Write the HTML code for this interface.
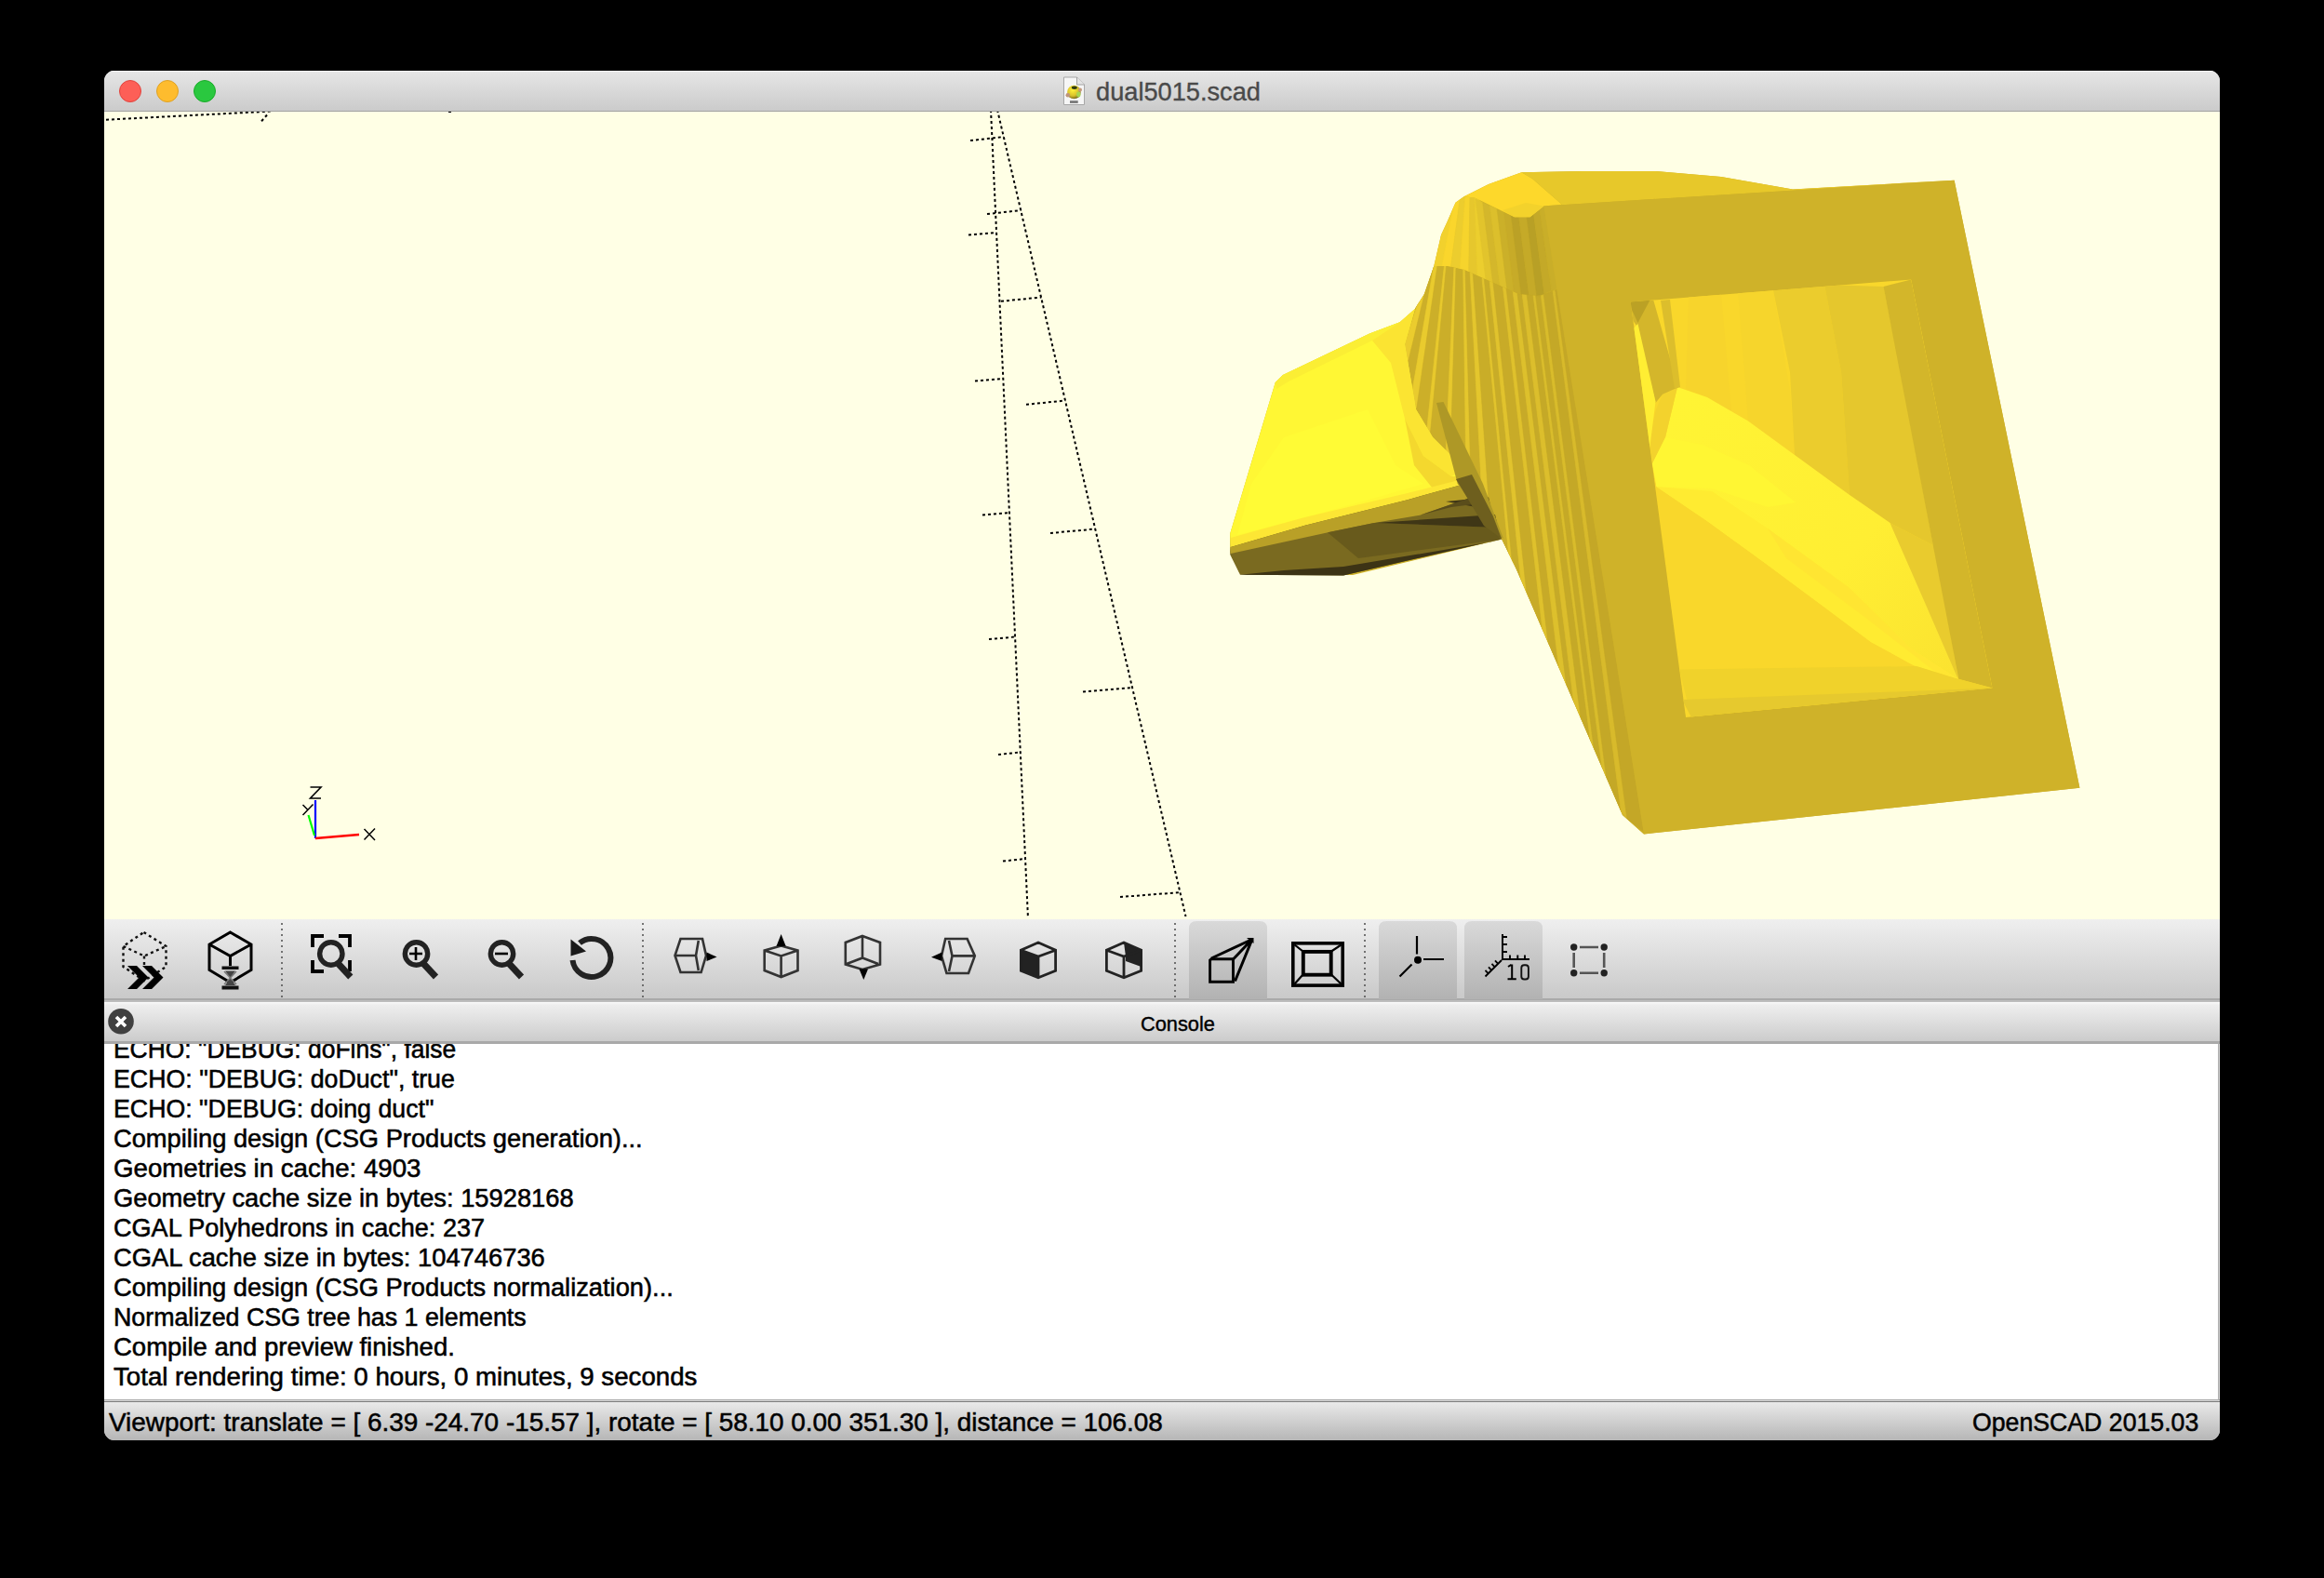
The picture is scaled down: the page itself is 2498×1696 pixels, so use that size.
<!DOCTYPE html>
<html><head><meta charset="utf-8">
<style>
*{margin:0;padding:0;box-sizing:border-box}
html,body{width:2498px;height:1696px;background:#000;overflow:hidden;font-family:"Liberation Sans",sans-serif}
.a{position:absolute}
#win{left:112px;top:76px;width:2274px;height:1472px;border-radius:11px;overflow:hidden;background:#e0e0e0}
#title{left:0;top:0;width:2274px;height:44px;background:linear-gradient(#e6e6e6,#cbcbcb);border-bottom:1px solid #a2a2a2;box-shadow:inset 0 1px 0 #f6f6f6}
.tl{width:24px;height:24px;border-radius:50%;top:10px}
#vp{left:0;top:44px;width:2274px;height:868px;background:#ffffe5;overflow:hidden}
#tb{left:0;top:912px;width:2274px;height:89px;background:linear-gradient(#efefef,#c9c9c9 85px,#a9a9a9 85px,#a9a9a9 87px,#bdbdbd 87px)}
#ch{left:0;top:1001px;width:2274px;height:45px;background:linear-gradient(#fafafa 0,#eeeeee 3px,#cccccc 42px,#a9a9a9 42px,#a9a9a9 45px)}
#cb{left:0;top:1046px;width:2273px;height:382px;background:#fff;border-right:1px solid #aaaaaa;overflow:hidden}
#sb{left:0;top:1428px;width:2274px;height:44px;background:linear-gradient(#aaaaaa 0,#aaaaaa 1px,#d8d8d8 1px,#d8d8d8 2px,#7a7a7a 2px,#7a7a7a 3px,#e9e9e9 3px,#b6b6b6)}
.ln{position:absolute;left:11px;font-size:27px;white-space:pre;color:#000;line-height:32px;transform-origin:0 0;-webkit-text-stroke:0.55px #000}
.tx{position:absolute;font-size:26px;white-space:pre;line-height:30px;transform-origin:0 0}
svg{position:absolute;left:0;top:0}
</style></head><body>
<div id="win" class="a">
  <div id="title" class="a">
    <div class="a tl" style="left:16px;top:10px;background:#fd5f57;border:1px solid #e0443e"></div>
    <div class="a tl" style="left:56px;top:10px;background:#febc2e;border:1px solid #dea123"></div>
    <div class="a tl" style="left:96px;top:10px;background:#2ac83f;border:1px solid #1aab29"></div>
    <div class="tx" style="left:1066px;top:5.4px;font-size:27.4px;line-height:36px;color:#4a4a4a;-webkit-text-stroke:0.35px #4a4a4a;transform:scaleX(0.993)">dual5015.scad</div>
  </div>
  <div id="vp" class="a"></div>
  <div id="tb" class="a"></div>
  <div id="ch" class="a">
    <div class="tx" style="left:1114px;top:11.1px;font-size:22.7px;line-height:24px;color:#000;-webkit-text-stroke:0.4px #000;transform:scaleX(0.96)">Console</div>
  </div>
  <div id="cb" class="a">
<div class="ln" style="left:10.00px;top:-10.5px;transform:scaleX(0.9786)">ECHO: &quot;DEBUG: doFins&quot;, false</div>
<div class="ln" style="left:10.00px;top:21.5px;transform:scaleX(0.9907)">ECHO: &quot;DEBUG: doDuct&quot;, true</div>
<div class="ln" style="left:10.00px;top:53.5px;transform:scaleX(0.9903)">ECHO: &quot;DEBUG: doing duct&quot;</div>
<div class="ln" style="left:10.00px;top:85.5px;transform:scaleX(1.0104)">Compiling design (CSG Products generation)...</div>
<div class="ln" style="left:10.00px;top:117.5px;transform:scaleX(1.0240)">Geometries in cache: 4903</div>
<div class="ln" style="left:10.00px;top:149.5px;transform:scaleX(1.0109)">Geometry cache size in bytes: 15928168</div>
<div class="ln" style="left:10.00px;top:181.5px;transform:scaleX(1.0020)">CGAL Polyhedrons in cache: 237</div>
<div class="ln" style="left:10.00px;top:213.5px;transform:scaleX(1.0120)">CGAL cache size in bytes: 104746736</div>
<div class="ln" style="left:10.00px;top:245.5px;transform:scaleX(1.0102)">Compiling design (CSG Products normalization)...</div>
<div class="ln" style="left:10.00px;top:277.5px;transform:scaleX(0.9920)">Normalized CSG tree has 1 elements</div>
<div class="ln" style="left:10.00px;top:309.5px;transform:scaleX(1.0185)">Compile and preview finished.</div>
<div class="ln" style="left:10.00px;top:341.5px;transform:scaleX(1.0246)">Total rendering time: 0 hours, 0 minutes, 9 seconds</div>
  </div>
  <div id="sb" class="a">
    <div class="tx" style="left:4.5px;top:10.1px;font-size:27.3px;-webkit-text-stroke:0.5px #000;transform:scaleX(1.0224)">Viewport: translate = [ 6.39 -24.70 -15.57 ], rotate = [ 58.10 0.00 351.30 ], distance = 106.08</div>
    <div class="tx" style="left:2008px;top:10.1px;font-size:27.3px;-webkit-text-stroke:0.5px #000;transform:scaleX(0.9773)">OpenSCAD 2015.03</div>
  </div>
</div>
<svg width="2498" height="1696" viewBox="0 0 2498 1696">
<defs>
<linearGradient id="pb" x1="0" y1="0" x2="0" y2="1"><stop offset="0" stop-color="#d9d9d9"/><stop offset="1" stop-color="#b2b2b2"/></linearGradient>
<clipPath id="colc"><polygon points="1541.3,286.0 1556.0,286.0 1574.3,289.9 1632.0,315.7 1655.0,318.0 1673.0,309.7 1767.0,896.5 1744.0,876.0 1630.0,612.0 1614.2,579.4 1583.0,523.0 1540.0,470.0 1522.0,440.0 1510.0,370.0 1520.9,332.0 1531.0,315.9"/></clipPath>
<clipPath id="upc"><polygon points="1564.5,217.8 1573.6,211.3 1585.2,212.6 1627.8,233.3 1644.6,233.3 1659.4,221.4 1673.0,309.7 1655.0,318.0 1632.0,315.7 1574.3,289.9 1556.0,286.0 1541.3,286.0 1549.0,252.6 1555.5,238.4"/></clipPath>
<linearGradient id="bandg" gradientUnits="userSpaceOnUse" x1="1790" y1="450" x2="2100" y2="720"><stop offset="0" stop-color="#fff434"/><stop offset="0.6" stop-color="#ffee33"/><stop offset="1" stop-color="#fbe330"/></linearGradient>
<clipPath id="inc"><polygon points="1752.7,324.5 2054.2,300.4 2141.5,739.6 1812.0,771.0"/></clipPath>
<clipPath id="vpc"><rect x="112" y="120" width="2274" height="868"/></clipPath>
</defs>
<g clip-path="url(#vpc)">
<line x1="1065" y1="118" x2="1104.9" y2="985" stroke="#000" stroke-width="2" stroke-dasharray="3 3" fill="none"/>
<line x1="1072" y1="118" x2="1274.5" y2="985" stroke="#000" stroke-width="2" stroke-dasharray="3 3" fill="none"/>
<line x1="1041" y1="252.5" x2="1071.1" y2="250" stroke="#000" stroke-width="2" stroke-dasharray="3 3" fill="none"/>
<line x1="1048" y1="409.5" x2="1078.3" y2="407" stroke="#000" stroke-width="2" stroke-dasharray="3 3" fill="none"/>
<line x1="1056" y1="553.5" x2="1085.0" y2="551" stroke="#000" stroke-width="2" stroke-dasharray="3 3" fill="none"/>
<line x1="1063" y1="687.0" x2="1091.1" y2="684.5" stroke="#000" stroke-width="2" stroke-dasharray="3 3" fill="none"/>
<line x1="1073" y1="811.0" x2="1096.8" y2="808.5" stroke="#000" stroke-width="2" stroke-dasharray="3 3" fill="none"/>
<line x1="1078" y1="925.5" x2="1102.1" y2="923" stroke="#000" stroke-width="2" stroke-dasharray="3 3" fill="none"/>
<line x1="1043" y1="151.0835" x2="1079.1" y2="147.0" stroke="#000" stroke-width="2" stroke-dasharray="3 3" fill="none"/>
<line x1="1061" y1="230.0965" x2="1097.5" y2="226.0" stroke="#000" stroke-width="2" stroke-dasharray="3 3" fill="none"/>
<line x1="1076" y1="323.801" x2="1119.4" y2="319.5" stroke="#000" stroke-width="2" stroke-dasharray="3 3" fill="none"/>
<line x1="1103" y1="434.768" x2="1145.3" y2="430.5" stroke="#000" stroke-width="2" stroke-dasharray="3 3" fill="none"/>
<line x1="1129" y1="572.954" x2="1177.5" y2="568.5" stroke="#000" stroke-width="2" stroke-dasharray="3 3" fill="none"/>
<line x1="1164" y1="743.5975" x2="1217.2" y2="739.0" stroke="#000" stroke-width="2" stroke-dasharray="3 3" fill="none"/>
<line x1="1204" y1="964.0382000000001" x2="1268.6" y2="959.1" stroke="#000" stroke-width="2" stroke-dasharray="3 3" fill="none"/>
<line x1="114" y1="128.7" x2="293" y2="119.5" stroke="#000" stroke-width="2" stroke-dasharray="3 3" fill="none"/>
<line x1="287" y1="123.5" x2="280" y2="131.5" stroke="#000" stroke-width="2" stroke-dasharray="3 3" fill="none"/>
<rect x="482" y="119" width="3" height="2" fill="#000"/>
<g>
<line x1="339" y1="901" x2="339" y2="860" stroke="#0000ff" stroke-width="2.2"/>
<line x1="338" y1="898" x2="331.5" y2="876" stroke="#00ff00" stroke-width="2.2"/>
<line x1="339" y1="901" x2="386" y2="897" stroke="#ff0000" stroke-width="2.4"/>
<path d="M333.5,846 H345 L333.5,858 H345" stroke="#000" stroke-width="1.6" fill="none"/>
<path d="M325.5,865 L331,870.5 M336.5,864.5 L325.5,876" stroke="#000" stroke-width="1.5" fill="none"/>
<path d="M391.5,891 L403,903 M403,890.5 L391.5,902.5" stroke="#000" stroke-width="1.5" fill="none"/>
</g>
<polygon points="1573.6,211.3 1600.0,198.0 1635.5,185.2 1700.0,184.0 1780.0,184.0 1850.0,190.0 1927.0,203.4 2100.6,193.8 2235.4,846.8 1767.0,896.5 1744.0,876.0 1630.0,612.0 1614.2,579.4 1454.0,618.0 1332.3,616.0 1322.2,593.6 1322.2,573.4 1370.8,411.1 1379.0,403.0 1472.2,358.4 1504.7,346.2 1520.9,332.0 1531.0,315.9 1541.3,286.0 1549.0,252.6 1555.5,238.4 1564.5,217.8" fill="#cdb029"/>
<polygon points="1541.3,286.0 1556.0,286.0 1574.3,289.9 1632.0,315.7 1655.0,318.0 1673.0,309.7 1767.0,896.5 1744.0,876.0 1630.0,612.0 1614.2,579.4 1583.0,523.0 1540.0,470.0 1522.0,440.0 1510.0,370.0 1520.9,332.0 1531.0,315.9" fill="#cbaf29"/>
<g clip-path="url(#colc)">
<polygon points="1528.0,300.0 1530.2,297.6 1494.7,371.2 1490.0,360.0" fill="#eccd2e" stroke="#eccd2e" stroke-width="0.6"/>
<polygon points="1530.2,297.6 1534.3,293.3 1503.2,391.6 1494.7,371.2" fill="#cdb029" stroke="#cdb029" stroke-width="0.6"/>
<polygon points="1534.3,293.3 1537.3,290.2 1509.4,406.5 1503.2,391.6" fill="#ebcc2e" stroke="#ebcc2e" stroke-width="0.6"/>
<polygon points="1537.3,290.2 1541.0,286.3 1517.1,425.1 1509.4,406.5" fill="#ccaf29" stroke="#ccaf29" stroke-width="0.6"/>
<polygon points="1541.0,286.3 1544.9,286.0 1522.8,438.8 1517.1,425.1" fill="#e9cb2e" stroke="#e9cb2e" stroke-width="0.6"/>
<polygon points="1544.9,286.0 1552.3,286.0 1533.4,464.2 1522.8,438.8" fill="#ccaf29" stroke="#ccaf29" stroke-width="0.6"/>
<polygon points="1552.3,286.0 1554.6,286.0 1536.8,472.2 1533.4,464.2" fill="#e8c92d" stroke="#e8c92d" stroke-width="0.6"/>
<polygon points="1554.6,286.0 1562.8,287.5 1553.6,498.2 1536.8,472.2" fill="#cbae29" stroke="#cbae29" stroke-width="0.6"/>
<polygon points="1562.8,287.5 1565.0,287.9 1558.7,505.0 1553.6,498.2" fill="#e7c82d" stroke="#e7c82d" stroke-width="0.6"/>
<polygon points="1565.0,287.9 1572.7,289.6 1576.1,528.4 1558.7,505.0" fill="#caae28" stroke="#caae28" stroke-width="0.6"/>
<polygon points="1572.7,289.6 1575.0,290.2 1581.5,535.5 1576.1,528.4" fill="#e5c72d" stroke="#e5c72d" stroke-width="0.6"/>
<polygon points="1575.0,290.2 1580.1,292.5 1593.8,552.1 1581.5,535.5" fill="#caad28" stroke="#caad28" stroke-width="0.6"/>
<polygon points="1580.1,292.5 1583.3,293.9 1601.8,562.8 1593.8,552.1" fill="#e4c62d" stroke="#e4c62d" stroke-width="0.6"/>
<polygon points="1583.3,293.9 1592.9,298.2 1621.6,596.2 1601.8,562.8" fill="#c9ad28" stroke="#c9ad28" stroke-width="0.6"/>
<polygon points="1592.9,298.2 1595.3,299.3 1625.4,605.0 1621.6,596.2" fill="#e2c42d" stroke="#e2c42d" stroke-width="0.6"/>
<polygon points="1595.3,299.3 1601.1,301.9 1635.0,626.9 1625.4,605.0" fill="#c8ac28" stroke="#c8ac28" stroke-width="0.6"/>
<polygon points="1601.1,301.9 1605.0,303.6 1641.4,641.5 1635.0,626.9" fill="#e1c32d" stroke="#e1c32d" stroke-width="0.6"/>
<polygon points="1605.0,303.6 1615.4,308.3 1658.3,680.2 1641.4,641.5" fill="#c8ab28" stroke="#c8ab28" stroke-width="0.6"/>
<polygon points="1615.4,308.3 1619.1,309.9 1664.4,694.2 1658.3,680.2" fill="#dfc12c" stroke="#dfc12c" stroke-width="0.6"/>
<polygon points="1619.1,309.9 1626.1,313.0 1675.8,720.1 1664.4,694.2" fill="#c7aa28" stroke="#c7aa28" stroke-width="0.6"/>
<polygon points="1626.1,313.0 1631.0,315.3 1683.9,738.7 1675.8,720.1" fill="#ddc02c" stroke="#ddc02c" stroke-width="0.6"/>
<polygon points="1631.0,315.3 1636.1,316.1 1691.7,756.6 1683.9,738.7" fill="#c6aa28" stroke="#c6aa28" stroke-width="0.6"/>
<polygon points="1636.1,316.1 1641.2,316.6 1699.3,773.8 1691.7,756.6" fill="#dcbe2c" stroke="#dcbe2c" stroke-width="0.6"/>
<polygon points="1641.2,316.6 1648.0,317.3 1709.5,797.3 1699.3,773.8" fill="#c5a927" stroke="#c5a927" stroke-width="0.6"/>
<polygon points="1648.0,317.3 1650.6,317.6 1713.5,806.3 1709.5,797.3" fill="#dabd2c" stroke="#dabd2c" stroke-width="0.6"/>
<polygon points="1650.6,317.6 1656.3,317.5 1722.0,825.8 1713.5,806.3" fill="#c5a927" stroke="#c5a927" stroke-width="0.6"/>
<polygon points="1656.3,317.5 1659.3,316.5 1726.8,836.7 1722.0,825.8" fill="#d9bc2b" stroke="#d9bc2b" stroke-width="0.6"/>
<polygon points="1659.3,316.5 1669.1,312.9 1742.4,872.3 1726.8,836.7" fill="#c4a827" stroke="#c4a827" stroke-width="0.6"/>
<polygon points="1669.1,312.9 1671.7,312.0 1748.9,879.8 1742.4,872.3" fill="#d8ba2b" stroke="#d8ba2b" stroke-width="0.6"/>
<polygon points="1671.7,312.0 1680.0,309.0 1775.0,900.0 1748.9,879.8" fill="#c4a727" stroke="#c4a727" stroke-width="0.6"/>
</g>
<g clip-path="url(#upc)">
<polygon points="1560.0,205.0 1565.0,206.3 1549.7,287.2 1540.0,289.8" fill="#f2d12d" stroke="#f2d12d" stroke-width="0.6"/>
<polygon points="1565.0,206.3 1570.0,207.7 1559.5,286.6 1549.7,287.2" fill="#fad62c" stroke="#fad62c" stroke-width="0.6"/>
<polygon points="1570.0,207.7 1575.0,209.0 1569.2,288.9 1559.5,286.6" fill="#eccd2e" stroke="#eccd2e" stroke-width="0.6"/>
<polygon points="1575.0,209.0 1580.0,210.3 1578.7,292.3 1569.2,288.9" fill="#f6d42c" stroke="#f6d42c" stroke-width="0.6"/>
<polygon points="1580.0,210.3 1585.0,211.7 1587.9,296.3 1578.7,292.3" fill="#e6c72d" stroke="#e6c72d" stroke-width="0.6"/>
<polygon points="1585.0,211.7 1590.0,213.0 1597.1,300.4 1587.9,296.3" fill="#ecce2e" stroke="#ecce2e" stroke-width="0.6"/>
<polygon points="1586.0,214.0 1593.7,217.5 1604.7,303.8 1597.1,300.4" fill="#e2c42c" stroke="#e2c42c" stroke-width="0.6"/>
<polygon points="1593.7,217.5 1601.4,221.1 1612.3,307.1 1604.7,303.8" fill="#d4b72b" stroke="#d4b72b" stroke-width="0.6"/>
<polygon points="1601.4,221.1 1609.1,224.6 1619.9,310.5 1612.3,307.1" fill="#dcbf2c" stroke="#dcbf2c" stroke-width="0.6"/>
<polygon points="1609.1,224.6 1616.7,228.1 1627.5,313.8 1619.9,310.5" fill="#cbb029" stroke="#cbb029" stroke-width="0.6"/>
<polygon points="1616.7,228.1 1624.4,231.7 1635.2,317.0 1627.5,313.8" fill="#c7ab28" stroke="#c7ab28" stroke-width="0.6"/>
<polygon points="1624.4,231.7 1632.6,233.0 1643.5,317.3 1635.2,317.0" fill="#bba126" stroke="#bba126" stroke-width="0.6"/>
<polygon points="1632.6,233.0 1641.1,233.0 1651.8,317.7 1643.5,317.3" fill="#c5aa28" stroke="#c5aa28" stroke-width="0.6"/>
<polygon points="1641.1,233.0 1648.5,230.3 1660.0,316.5 1651.8,317.7" fill="#b8a026" stroke="#b8a026" stroke-width="0.6"/>
<polygon points="1648.5,230.3 1655.0,224.8 1668.0,314.2 1660.0,316.5" fill="#c4a928" stroke="#c4a928" stroke-width="0.6"/>
<polygon points="1655.0,224.8 1662.0,221.0 1676.0,312.0 1668.0,314.2" fill="#c9ae29" stroke="#c9ae29" stroke-width="0.6"/>
</g>
<polygon points="1573.6,211.3 1600.0,198.0 1635.5,185.2 1647.0,192.0 1678.8,219.7 1659.4,221.4 1644.6,233.3 1627.8,233.3 1585.2,212.6" fill="#fdd82b"/>
<polygon points="1615.0,226.0 1640.0,218.0 1659.4,221.4 1644.6,233.3 1627.8,233.3" fill="#f3d22c"/>
<polygon points="1635.5,185.2 1700.0,184.0 1780.0,184.0 1850.0,190.0 1927.0,203.4 2100.6,193.8 1659.4,221.4 1678.8,219.7 1647.0,192.0" fill="#e7c82a"/>
<polygon points="1370.8,411.1 1379.0,403.0 1472.2,358.4 1504.7,346.2 1520.9,332.0 1510.0,370.0 1522.0,440.0 1540.0,470.0 1575.0,505.0 1588.5,512.4 1572.0,520.7 1512.8,537.2 1457.7,551.0 1402.6,564.7 1322.8,588.0 1322.2,573.4" fill="#fff734"/>
<polygon points="1379.0,403.0 1472.2,358.4 1504.7,346.2 1503.0,352.0 1475.0,366.0 1385.0,410.0 1372.0,418.0 1370.8,411.1" fill="#fbee34"/>
<polygon points="1475.0,366.0 1504.7,346.2 1520.9,332.0 1510.0,370.0 1522.0,440.0 1540.0,470.0 1575.0,505.0 1560.0,512.0 1530.0,490.0 1510.0,450.0 1495.0,390.0" fill="#fbe432"/>
<polygon points="1510.0,450.0 1530.0,490.0 1560.0,512.0 1588.5,512.4 1572.0,520.7 1540.0,525.0 1520.0,500.0" fill="#f4d82e"/>
<polygon points="1380.0,470.0 1470.0,440.0 1500.0,500.0 1530.0,520.0 1457.7,541.0 1402.6,556.0 1330.0,575.0 1345.0,520.0" fill="#fffb35"/>
<polygon points="1322.8,578.0 1402.6,556.0 1457.7,543.0 1512.8,530.0 1572.0,515.0 1572.0,520.7 1512.8,537.2 1457.7,551.0 1402.6,564.7 1322.8,588.0" fill="#fde634"/>
<polygon points="1588.5,512.4 1572.0,520.7 1512.8,537.2 1457.7,551.0 1402.6,564.7 1322.8,588.0 1322.2,596.0 1333.0,617.7 1444.0,618.4 1614.2,579.4 1600.0,540.0" fill="#7a6a20"/>
<polygon points="1588.5,512.4 1572.0,520.7 1512.8,537.2 1457.7,551.0 1402.6,564.7 1322.8,588.0 1322.8,595.0 1427.4,572.3 1477.0,562.0 1526.5,553.7 1581.6,534.4 1594.0,530.3" fill="#b9a027"/>
<polygon points="1427.0,572.3 1477.0,562.0 1610.0,567.0 1612.0,580.0 1460.0,600.0" fill="#685a1c"/>
<polygon points="1478.0,562.0 1607.0,553.0 1610.0,567.0" fill="#3f3616"/>
<polygon points="1554.0,539.0 1600.0,534.4 1603.0,548.0" fill="#3f3616"/>
<polygon points="1526.0,553.7 1581.6,534.4 1594.0,530.3 1600.0,540.0 1560.0,545.0" fill="#5a4d1b"/>
<polygon points="1333.0,617.7 1380.0,613.0 1444.0,609.0 1602.0,582.6 1614.2,579.4 1444.0,618.4" fill="#3c3315"/>
<polygon points="1544.0,433.0 1551.5,432.0 1594.0,520.0 1616.0,579.0 1605.0,570.0 1566.7,520.0" fill="#ae9826"/>
<polygon points="1565.0,515.0 1582.0,510.0 1605.0,555.0 1614.0,579.0 1595.0,565.0" fill="#6e5f1e"/>
<path d="M1659.4,221.4 L2100.6,193.8 L2235.4,846.8 L1767.0,896.5 Z M1752.7,324.5 L2054.2,300.4 L2141.5,739.6 L1812.0,771.0 Z" fill="#cfb229" fill-rule="evenodd"/>
<polygon points="1752.7,324.5 2054.2,300.4 2141.5,739.6 1812.0,771.0" fill="#f9d72b"/>
<g clip-path="url(#inc)">
<polygon points="1815.0,318.0 1850.0,315.0 1862.0,452.0 1835.0,427.0 1812.0,418.0" fill="#f7d42c"/>
<polygon points="1868.0,314.0 1905.6,310.0 1924.0,420.0 1929.0,489.0 1879.0,452.5" fill="#f6d52c"/>
<polygon points="1905.6,310.0 1961.0,306.0 1979.0,400.0 1988.0,532.0 1929.0,489.0 1924.0,400.0" fill="#ebcc2d"/>
<polygon points="1961.0,306.0 2024.5,308.0 2043.0,400.0 2104.6,728.6 2079.5,587.0 2031.5,562.0 1988.0,532.0 1979.0,400.0" fill="#e5c72d"/>
<polygon points="2031.5,562.0 2079.5,587.0 2104.6,728.6 2054.0,697.0" fill="#e9cb2e"/>
<polygon points="1803.0,416.0 1835.0,427.0 1879.0,452.5 1929.0,489.0 1988.0,532.0 2031.5,562.0 2070.0,650.0 2104.6,729.7 2056.6,715.0 2011.0,690.0 1965.0,655.6 1897.0,605.0 1835.0,560.0 1780.5,523.0 1776.0,498.0 1790.0,470.0" fill="url(#bandg)"/>
<polygon points="1780.5,523.0 1840.0,528.0 1900.0,568.0 1988.0,632.0 2054.0,697.0 2104.6,729.7 2056.6,715.0 2011.0,690.0 1965.0,655.6 1897.0,605.0 1835.0,560.0" fill="#ffeb31"/>
<polygon points="1776.0,498.0 1790.0,470.0 1830.0,478.0 1880.0,500.0 1930.0,540.0 1900.0,545.0 1840.0,525.0 1780.5,523.0" fill="#fff633"/>
<polygon points="1900.0,568.0 1988.0,632.0 2054.0,697.0 2104.6,729.7 2080.0,722.0 2000.0,660.0 1920.0,600.0" fill="#ffe532"/>
<polygon points="1803.0,416.0 1790.0,470.0 1776.0,498.0 1773.0,470.0 1780.0,440.0 1787.0,424.0" fill="#f3d22d"/>
<polygon points="1740.0,324.5 1777.3,322.7 1803.9,416.2 1787.1,423.8 1779.5,433.0 1760.0,351.0" fill="#d4b62b"/>
<polygon points="1785.0,323.0 1795.0,322.0 1806.0,416.0 1800.0,418.0" fill="#dcbe2c"/>
<polygon points="1750.0,324.5 1773.5,322.5 1760.5,347.0" fill="#bba125"/>
<polygon points="1760.5,348.0 1779.5,431.4 1772.7,486.2 1752.0,357.0" fill="#ffee33"/>
<polygon points="2024.5,308.0 2054.2,300.4 2141.5,739.6 2105.3,729.8" fill="#d3b62a"/>
<polygon points="1805.0,719.5 2060.0,716.0 2104.6,729.7 2141.5,739.6 1818.0,771.0" fill="#f0d22b"/>
<polygon points="1808.0,752.0 2141.5,739.6 1818.0,771.0" fill="#e6c92e"/>
</g>
</g>
<path d="M1278,1074 V998 Q1278,990 1286,990 H1354 Q1362,990 1362,998 V1074 Z" fill="url(#pb)"/>
<path d="M1482,1074 V998 Q1482,990 1490,990 H1558 Q1566,990 1566,998 V1074 Z" fill="url(#pb)"/>
<path d="M1574,1074 V998 Q1574,990 1582,990 H1650 Q1658,990 1658,998 V1074 Z" fill="url(#pb)"/>
<line x1="303" y1="992" x2="303" y2="1072" stroke="#555" stroke-width="1.6" stroke-dasharray="2 4"/>
<line x1="691" y1="992" x2="691" y2="1072" stroke="#555" stroke-width="1.6" stroke-dasharray="2 4"/>
<line x1="1263" y1="992" x2="1263" y2="1072" stroke="#555" stroke-width="1.6" stroke-dasharray="2 4"/>
<line x1="1467" y1="992" x2="1467" y2="1072" stroke="#555" stroke-width="1.6" stroke-dasharray="2 4"/>
<path d="M154.5,1002 L178.5,1017 V1039 L155,1054 L132.5,1039 V1017 Z M132.5,1017 L155,1027.5 L178.5,1017 M155,1027.5 V1040" stroke="#111" stroke-width="2.4" fill="none" stroke-dasharray="3 3.5"/>
<path d="M137,1038 H147 L159.5,1050.5 L147,1063 H137 L149.5,1050.5 Z M153,1038 H163 L175.5,1050.5 L163,1063 H153 L165.5,1050.5 Z" fill="#000"/>
<path d="M247.5,1002 L270,1015 V1042.5 L247.5,1056 L225,1042.5 V1015 Z M225,1015 L247.5,1027.5 L270,1015 M247.5,1027.5 V1038" stroke="#000" stroke-width="3" fill="none" stroke-linejoin="miter"/>
<path d="M238.5,1038.5 H256.5 V1042 H238.5 Z M238.5,1059.5 H256.5 V1063.5 H238.5 Z" fill="#111"/><path d="M242,1043.5 L253,1043.5 L247.5,1051 Z M242,1059 L253,1059 L247.5,1051 Z" fill="#444"/>
<path d="M241,1044 L254,1058 M254,1044 L241,1058" stroke="#777" stroke-width="1.5"/>
<path d="M336,1018 V1006 H348 M364,1006 H376 V1018 M336,1032 V1044 H348 M376,1032 V1044" stroke="#000" stroke-width="3.8" fill="none"/>
<circle cx="355.8" cy="1025" r="12.2" stroke="#222" stroke-width="5.4" fill="none"/><line x1="363.8" y1="1036" x2="376.8" y2="1050" stroke="#222" stroke-width="7"/>
<circle cx="447.5" cy="1025" r="12.2" stroke="#222" stroke-width="5.4" fill="none"/><line x1="455.5" y1="1036" x2="468.5" y2="1050" stroke="#222" stroke-width="7"/>
<path d="M440,1025 H454 M447,1018 V1032" stroke="#000" stroke-width="2.6"/>
<circle cx="539.5" cy="1025" r="12.2" stroke="#222" stroke-width="5.4" fill="none"/><line x1="547.5" y1="1036" x2="560.5" y2="1050" stroke="#222" stroke-width="7"/>
<path d="M532,1025 H546" stroke="#000" stroke-width="2.6"/>
<path d="M615.5,1032 A20.5,20.5 0 1 0 623,1013.5" stroke="#222" stroke-width="6" fill="none"/>
<path d="M613.5,1009.5 V1027.5 L630,1022.5 Z" fill="#1a1a1a"/>
<path d="M731.5,1009 H755 L759,1027 L753.6,1045 H731.5 L725.5,1027 Z M750.8,1011 L748,1027 L750.8,1043 M725.5,1027 H748" stroke="#333" stroke-width="2.6" fill="none"/>
<path d="M759.5,1023.5 L770.5,1028.5 L759.5,1033 Z" fill="#000"/>
<path d="M839.6,1016.5 L857.5,1021.5 V1043 L839.6,1050 L821.7,1043 V1021.5 Z M821.7,1021.5 L839.6,1027.5 L857.5,1021.5 M839.6,1027.5 V1050" stroke="#333" stroke-width="2.6" fill="none"/>
<path d="M834.5,1017 L839.6,1004 L844.7,1017 Z" fill="#000"/>
<path d="M927,1006 L946,1013 V1036.5 L927,1042 L908.8,1036.5 V1013 Z M927,1006 V1029.5 L910,1036 M927,1029.5 L944,1036" stroke="#333" stroke-width="2.6" fill="none"/>
<path d="M923.5,1041.5 H933 L928.3,1053 Z" fill="#000"/>
<path d="M1016.2,1009 H1039.6 L1047.8,1027.4 L1041,1046 H1017.5 L1012,1027.4 Z M1020,1011 L1023.5,1027.4 L1020,1044 M1023.5,1027.4 H1047" stroke="#333" stroke-width="2.6" fill="none"/>
<path d="M1012.5,1023.5 L1001,1028.7 L1012.5,1033 Z" fill="#000"/>
<path d="M1097.4,1021.2 L1116,1028 V1050.8 L1097.4,1043.2 Z" fill="#222"/>
<path d="M1116,1013 L1134.6,1021.2 V1043.2 L1116,1050.8 L1097.4,1043.2 V1021.2 Z M1097.4,1021.2 L1116,1028 L1134.6,1021.2 M1116,1028 V1050.8" stroke="#222" stroke-width="2.8" fill="none"/>
<path d="M1208,1013 L1226.6,1021.2 V1039 L1210,1033 V1028 Z" fill="#222"/>
<path d="M1208,1013 L1226.6,1021.2 V1043.2 L1208,1050.8 L1189.4,1043.2 V1021.2 Z M1189.4,1021.2 L1208,1028 L1226.6,1021.2 M1208,1028 V1050.8" stroke="#222" stroke-width="2.8" fill="none"/>
<path d="M1300.6,1055.2 V1032 L1302,1030.8 H1325.5 V1055.2 Z" stroke="#000" stroke-width="2.9" fill="none" stroke-linejoin="miter"/>
<path d="M1302,1030 L1346,1009.5 M1325.5,1031 L1344,1011.5 M1327.5,1054.5 L1345.5,1010.5" stroke="#000" stroke-width="3" fill="none"/>
<path d="M1340,1008 H1347.5 V1014 Z" fill="#000"/>
<rect x="1389.8" y="1013.8" width="53.4" height="45.3" stroke="#000" stroke-width="3.6" fill="none"/>
<rect x="1400.8" y="1022.9" width="29.9" height="24.8" stroke="#000" stroke-width="3.9" fill="none"/>
<path d="M1391.5,1015.5 L1400.5,1022.5 M1441.5,1015.5 L1431,1022.5 M1391.5,1057.5 L1400.5,1047.5 M1441.5,1057.5 L1431,1047.5" stroke="#000" stroke-width="2.2"/>
<path d="M1523,1006 V1025.5 M1530,1031 H1552 M1517.5,1036.5 L1504.5,1049.5" stroke="#000" stroke-width="2.2"/>
<circle cx="1524" cy="1031.8" r="4" fill="#000"/>
<path d="M1615,1004 V1031 H1644 M1615,1007 H1620 M1615,1015 H1620 M1615,1023 H1620 M1623,1026.5 V1031 M1631.3,1026.5 V1031 M1639,1026.5 V1031 M1614,1032 L1596.5,1049.5 M1610.2,1035.8 L1607.0,1032.4 M1606.7,1039.3 L1603.5,1035.9 M1603.2,1042.8 L1600.0,1039.4 M1599.7,1046.3 L1596.5,1042.9" stroke="#000" stroke-width="1.9" fill="none"/>
<path d="M1621,1039 L1624.5,1036.8 M1625.2,1036.5 V1052.5 M1620.5,1052.3 H1629.8" stroke="#000" stroke-width="2" fill="none"/><rect x="1635.3" y="1037.2" width="7.6" height="15.3" rx="3" stroke="#111" stroke-width="1.9" fill="none"/>
<circle cx="1691.7" cy="1018" r="3.7" fill="#222"/>
<circle cx="1724.2" cy="1018" r="3.7" fill="#222"/>
<circle cx="1691.7" cy="1045.8" r="3.7" fill="#222"/>
<circle cx="1724.2" cy="1045.8" r="3.7" fill="#222"/>
<path d="M1698,1018 H1718 M1698,1045.8 H1718 M1691.7,1024 V1040 M1724.2,1024 V1040" stroke="#555" stroke-width="2.6"/>
<circle cx="130" cy="1097.8" r="13.8" fill="#404040"/>
<path d="M125,1093 L135,1103 M135,1093 L125,1103" stroke="#fff" stroke-width="3.6"/>
<path d="M1143.5,83 H1157.5 L1165.5,91 V112.5 H1143.5 Z" fill="#f6f6f6" stroke="#a8a8a8" stroke-width="1"/>
<path d="M1157.5,83 V91 H1165.5" fill="#e4e4e4" stroke="#9a9a9a" stroke-width="0.9"/>
<defs><radialGradient id="sph" cx="0.4" cy="0.35" r="0.7"><stop offset="0" stop-color="#fff23a"/><stop offset="0.6" stop-color="#d9c22a"/><stop offset="1" stop-color="#6a5a18"/></radialGradient></defs>
<circle cx="1154.4" cy="99" r="7.3" fill="url(#sph)"/>
<ellipse cx="1154.8" cy="94.3" rx="3" ry="1.7" fill="#2e3a12"/>
<ellipse cx="1159.3" cy="101.5" rx="2.2" ry="3" fill="#a6d652"/>
<circle cx="1161" cy="96.5" r="2" fill="#c49a7c"/>
<circle cx="1147.8" cy="102.2" r="2.3" fill="#bf957a"/>
<rect x="1150" y="108.2" width="8.7" height="2.7" fill="#777"/>
</svg>
</body></html>
